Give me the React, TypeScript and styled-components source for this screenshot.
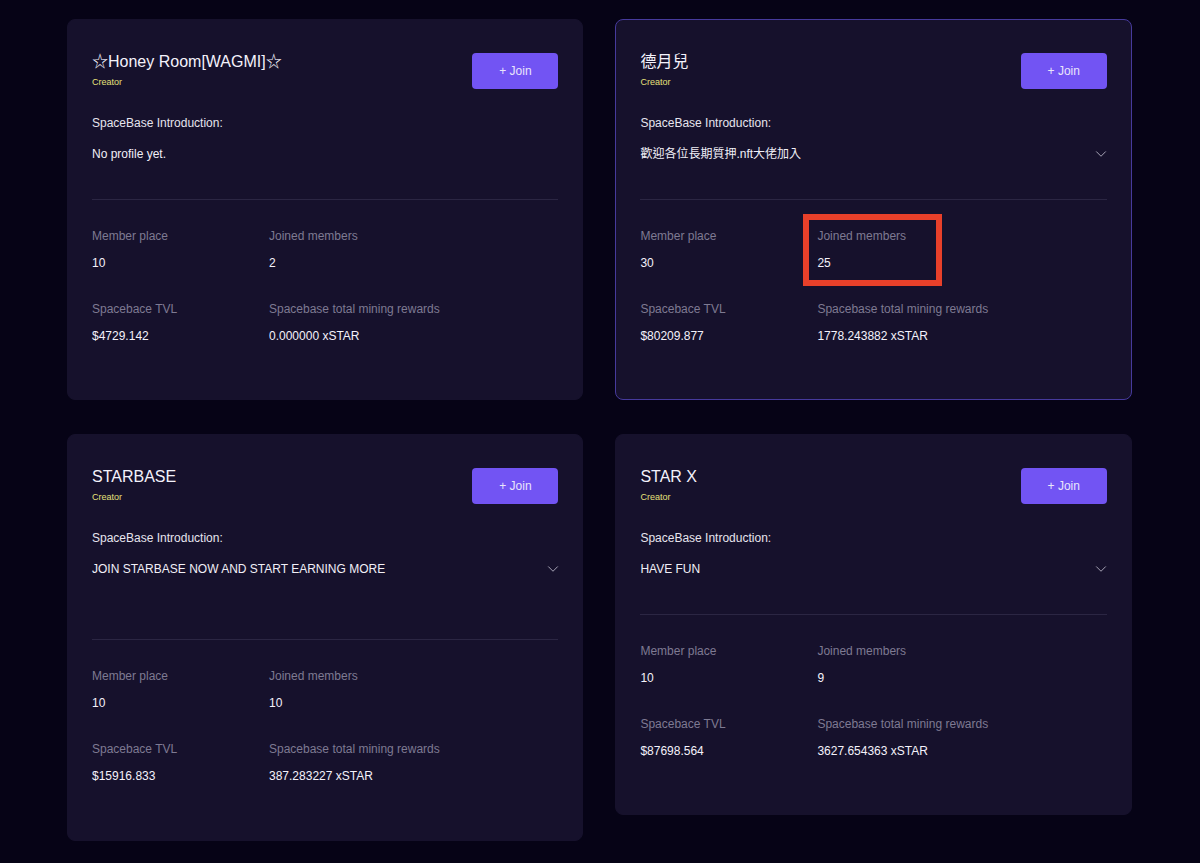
import { ChevronDown } from 'lucide-react'
import styled, { createGlobalStyle } from 'styled-components'

interface SpaceBase {
  name: string
  intro: string
  place: number
  joined: number
  tvl: string
  rewards: string
  tall?: boolean
  selected?: boolean
  expandable?: boolean
  marked?: boolean
}

const bases: SpaceBase[] = [
  {
    name: '☆Honey Room[WAGMI]☆',
    intro: 'No profile yet.',
    place: 10,
    joined: 2,
    tvl: '$4729.142',
    rewards: '0.000000 xSTAR',
  },
  {
    name: '德月兒',
    intro: '歡迎各位長期質押.nft大佬加入',
    place: 30,
    joined: 25,
    tvl: '$80209.877',
    rewards: '1778.243882 xSTAR',
    selected: true,
    expandable: true,
    marked: true,
  },
  {
    name: 'STARBASE',
    intro: 'JOIN STARBASE NOW AND START EARNING MORE',
    place: 10,
    joined: 10,
    tvl: '$15916.833',
    rewards: '387.283227 xSTAR',
    tall: true,
    expandable: true,
  },
  {
    name: 'STAR X',
    intro: 'HAVE FUN',
    place: 10,
    joined: 9,
    tvl: '$87698.564',
    rewards: '3627.654363 xSTAR',
    expandable: true,
  },
]

const App = () => {
  return (
    <>
      <GlobalStyle />
      <Page>
        {bases.map((base) => (
          <Card key={base.name} $selected={base.selected} $tall={base.tall}>
            <Header>
              <div>
                <Name>{base.name}</Name>
                <Creator>Creator</Creator>
              </div>
              <JoinButton>+ Join</JoinButton>
            </Header>
            <IntroLabel>SpaceBase Introduction:</IntroLabel>
            <IntroRow $tall={base.tall}>
              <span>{base.intro}</span>
              {base.expandable && <ChevronDown size={18} strokeWidth={1.2} />}
            </IntroRow>
            <Divider />
            <Stats>
              <Stat>
                <StatLabel>Member place</StatLabel>
                <StatValue>{base.place}</StatValue>
              </Stat>
              <Stat>
                {base.marked && <Highlight />}
                <StatLabel>Joined members</StatLabel>
                <StatValue>{base.joined}</StatValue>
              </Stat>
              <Stat>
                <StatLabel>Spacebace TVL</StatLabel>
                <StatValue>{base.tvl}</StatValue>
              </Stat>
              <Stat>
                <StatLabel>Spacebase total mining rewards</StatLabel>
                <StatValue>{base.rewards}</StatValue>
              </Stat>
            </Stats>
          </Card>
        ))}
      </Page>
    </>
  )
}

const GlobalStyle = createGlobalStyle`
  html, body {
    margin: 0;
    background: #060316;
  }

  body {
    font-family: 'Liberation Sans', 'Noto Sans CJK TC', sans-serif;
  }
`

const Page = styled.div`
  box-sizing: border-box;
  width: 1200px;
  height: 863px;
  overflow: hidden;
  padding: 19px 68px 0 67px;
  display: grid;
  grid-template-columns: 516.4px 516.4px;
  column-gap: 32px;
  row-gap: 34px;
  align-items: start;
  align-content: start;
`

const Card = styled.div<{ $selected?: boolean; $tall?: boolean }>`
  box-sizing: border-box;
  min-height: ${(props) => (props.$tall ? '407px' : '381px')};
  padding: 24px;
  background: #16112c;
  border-radius: 8px;
  border: 1px solid ${(props) => (props.$selected ? '#463a9c' : '#16112c')};
`

const Header = styled.div`
  display: flex;
  justify-content: space-between;
  align-items: flex-start;
  padding-top: 9px;
  height: 61px;
  box-sizing: border-box;
`

const Name = styled.div`
  margin-top: -2px;
  font-size: 16px;
  line-height: 22px;
  color: #f4f2fb;
`

const Creator = styled.div`
  margin-top: 4px;
  font-size: 9px;
  line-height: 11px;
  color: #e5e07a;
`

const JoinButton = styled.button`
  width: 86px;
  height: 36px;
  border: none;
  border-radius: 4px;
  background: #7254f3;
  color: #e9e5fb;
  font-family: inherit;
  font-size: 12px;
`

const IntroLabel = styled.div`
  margin-top: 10px;
  font-size: 12px;
  line-height: 16px;
  color: #e6e4ee;
`

const IntroRow = styled.div<{ $tall?: boolean }>`
  display: flex;
  justify-content: space-between;
  align-items: center;
  margin-top: 15px;
  height: 16px;
  margin-bottom: ${(props) => (props.$tall ? '62px' : '37px')};
  font-size: 12px;
  line-height: 16px;
  color: #f1eff7;

  svg {
    margin-right: -3.5px;
    color: #b5b2c4;
  }
`

const Divider = styled.div`
  height: 1px;
  background: #2b2643;
`

const Stats = styled.div`
  display: grid;
  grid-template-columns: 177px 1fr;
  row-gap: 28px;
  margin-top: 28px;
`

const Stat = styled.div`
  position: relative;
  height: 45px;
`

const Highlight = styled.div`
  position: absolute;
  left: -14.6px;
  top: -14px;
  width: 139px;
  height: 72px;
  box-sizing: border-box;
  border: 6px solid #e8402a;
`

const StatLabel = styled.div`
  font-size: 12px;
  line-height: 16px;
  color: #7e7a92;
`

const StatValue = styled.div`
  margin-top: 11px;
  font-size: 12px;
  line-height: 16px;
  color: #f4f2fb;
`

export default App
